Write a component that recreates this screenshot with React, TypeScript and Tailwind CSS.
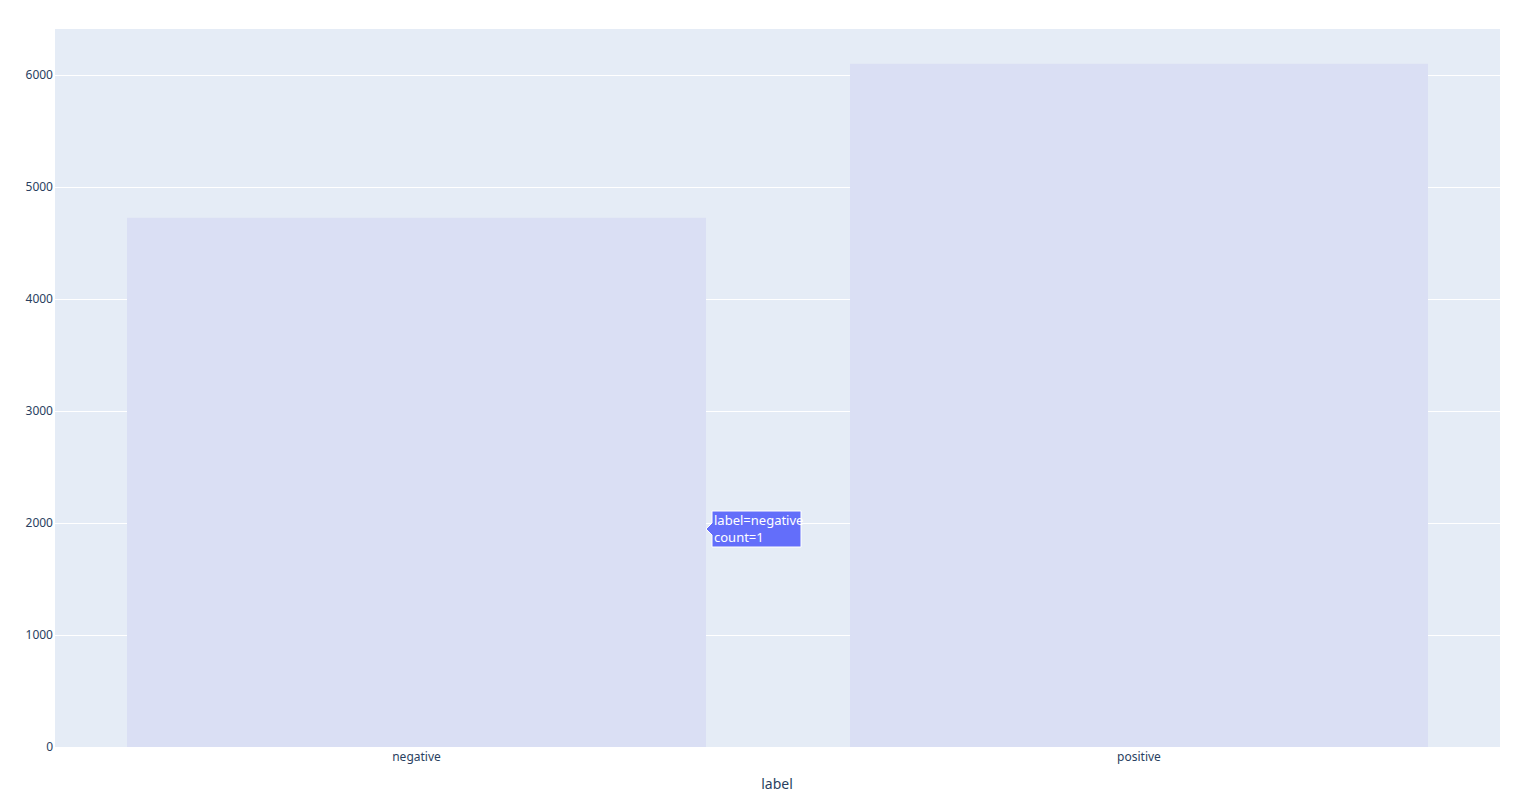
const yTicks = [0, 1000, 2000, 3000, 4000, 5000, 6000];
const bars = [
  { name: "negative", x: 127, w: 579, value: 4725 },
  { name: "positive", x: 850, w: 578, value: 6100 },
];

const PLOT = { left: 55, right: 1500, top: 29, bottom: 747 };
const yScale = (v: number) => PLOT.bottom - (v / 1000) * 112;

export default function App() {
  return (
    <div className="w-[1520px] h-[802px] bg-white">
      <svg width={1520} height={802} className="block font-['Open_Sans','Liberation_Sans',sans-serif]">
        <rect x={PLOT.left} y={PLOT.top} width={PLOT.right - PLOT.left} height={PLOT.bottom - PLOT.top} fill="#e5ecf6" />
        {yTicks.slice(1).map((t) => (
          <line key={t} x1={PLOT.left} x2={PLOT.right} y1={yScale(t) + 0.5} y2={yScale(t) + 0.5} stroke="#fff" strokeWidth={1} />
        ))}
        {bars.map((b) => (
          <rect key={b.name} x={b.x} y={yScale(b.value)} width={b.w} height={PLOT.bottom - yScale(b.value)} fill="#dadff4" />
        ))}
        {yTicks.map((t) => (
          <text key={t} x={53} y={yScale(t) + 4} textAnchor="end" fontSize={12} fill="#2a3f5f">{t}</text>
        ))}
        {bars.map((b) => (
          <text key={b.name} x={b.x + b.w / 2} y={761} textAnchor="middle" fontSize={12} fill="#2a3f5f">{b.name}</text>
        ))}
        <text x={777} y={789} textAnchor="middle" fontSize={14} fill="#2a3f5f">label</text>
        <g className="font-['Liberation_Sans',Arial,sans-serif]">
          <path d="M706 529 L712 523 L712 511 L801 511 L801 547 L712 547 L712 535 Z" fill="#636efa" stroke="#fff" strokeWidth={1} />
          <text x={714} y={525} fontSize={13} fill="#fff">label=negative</text>
          <text x={714} y={542} fontSize={13} fill="#fff">count=1</text>
        </g>
      </svg>
    </div>
  );
}
